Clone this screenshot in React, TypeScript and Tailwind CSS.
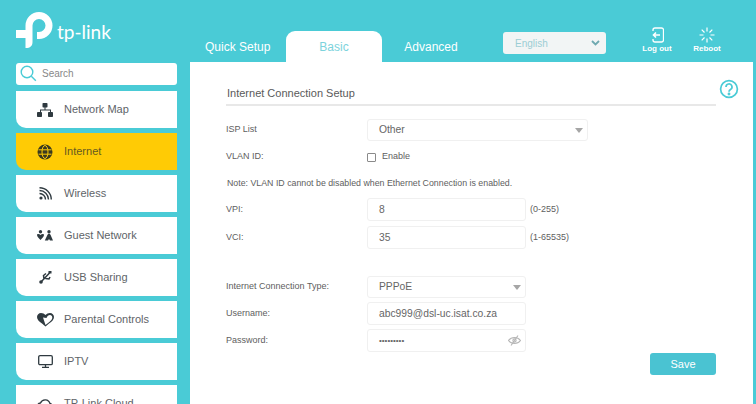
import type { ReactNode } from 'react';

const TEAL = '#4acbd6';

function Logo() {
  return (
    <svg width="37" height="36" viewBox="0 0 37 36" className="shrink-0">
      <path
        d="M9.500 13.500A13.500 13.500 0 1 1 23 27h-2v-7h2a6.500 6.500 0 1 0-6.500-6.500V30c0 4-2.500 6-6.500 6h-.5V26H0v-8h9.500z"
        fill="#fff"
      />
    </svg>
  );
}

const NAV: { label: string; icon: ReactNode; active?: boolean }[] = [
  {
    label: 'Network Map',
    icon: (
      <svg width="16" height="14" viewBox="0 0 16 14" fill="#2f3a40">
        <rect x="5.500" y="0" width="5" height="4.500" rx="0.800" />
        <rect x="0" y="9" width="5" height="5" rx="0.800" />
        <rect x="11" y="9" width="5" height="5" rx="0.800" />
        <path d="M7.500 4h1v2.500h5.500V9h-1V7.500h-9V9h-1V6.500h4.500z" />
      </svg>
    ),
  },
  {
    label: 'Internet',
    active: true,
    icon: (
      <svg width="16" height="16" viewBox="0 0 16 16" fill="none">
        <circle cx="8" cy="8" r="7.500" fill="#3a3a20" />
        <ellipse cx="8" cy="8" rx="3" ry="6.500" stroke="#ffcb05" strokeWidth="1" />
        <path d="M1.500 5.800h13M1.500 10.200h13" stroke="#ffcb05" strokeWidth="1" />
      </svg>
    ),
  },
  {
    label: 'Wireless',
    icon: (
      <svg width="13" height="13" viewBox="0 0 13 13" fill="none" stroke="#2f3a40" strokeWidth="1.400">
        <circle cx="2" cy="11" r="1.600" fill="#2f3a40" stroke="none" />
        <path d="M0.500 6.500a6 6 0 0 1 6 6M0.500 3.500a9 9 0 0 1 9 9M0.500 0.700a11.800 11.800 0 0 1 11.800 11.800" />
      </svg>
    ),
  },
  {
    label: 'Guest Network',
    icon: (
      <svg width="16" height="12" viewBox="0 0 16 12" fill="#2f3a40">
        <circle cx="3.500" cy="1.700" r="1.700" />
        <circle cx="12" cy="1.700" r="1.700" />
        <path d="M0 5c0-.8.600-1 1.200-1 1 0 1.700.3 2.300 1 .6-.7 1.300-1 2.300-1 .6 0 1.200.2 1.200 1 0 1.500-2 3.500-3.500 5C2 8.500 0 6.500 0 5zM12 3.800c.8 0 1.200.5 1.600 1.200l2.400 5.500h-3L12 9l-1 1.500H7.800L10.400 5c.4-.7.800-1.200 1.600-1.200z" />
      </svg>
    ),
  },
  {
    label: 'USB Sharing',
    icon: (
      <svg width="13" height="13" viewBox="0 0 13 13" fill="none" stroke="#2f3a40" strokeWidth="1.500">
        <circle cx="2" cy="11" r="1.800" fill="#2f3a40" stroke="none" />
        <path d="M2 11 10.500 2M5 8l-.5-3.500L7 2.500M6.500 7.500l3.500.5 1-2" />
        <rect x="9.500" y="0" width="3" height="2.500" fill="#2f3a40" stroke="none" />
      </svg>
    ),
  },
  {
    label: 'Parental Controls',
    icon: (
      <svg width="17" height="14" viewBox="0 0 17 14">
        <path
          d="M4 0C1.800 0 0 1.800 0 4c0 2.500 2 4.500 5 6.500l3.500 3 3.500-3c3-2 5-4 5-6.500 0-2.200-1.800-4-4-4-1.900 0-3.300.8-4.500 2C7.300.8 5.900 0 4 0z"
          fill="#2f3a40"
        />
        <path d="M8.500 12 12 9.200c2-1.500 3.300-3 3.300-4.700 0-1.300-1-2.400-2.300-2.400-1.500 0-2.800 1.200-3.500 3L6 4.500" fill="#fff" />
      </svg>
    ),
  },
  {
    label: 'IPTV',
    icon: (
      <svg width="15" height="13" viewBox="0 0 15 13" fill="none" stroke="#2f3a40" strokeWidth="1.300">
        <rect x="0.700" y="0.700" width="13.600" height="9" rx="1.300" />
        <path d="M7.500 10v2M4 12.300h7" />
      </svg>
    ),
  },
  {
    label: 'TP-Link Cloud',
    icon: (
      <svg width="16" height="12" viewBox="0 0 16 12" fill="none" stroke="#2f3a40" strokeWidth="1.300">
        <path d="M4 11h8.500a2.800 2.800 0 0 0 .5-5.500A5 5 0 0 0 3.500 5 3 3 0 0 0 4 11z" />
      </svg>
    ),
  },
];

function NavItem({ label, icon, active }: { label: string; icon: ReactNode; active?: boolean }) {
  return (
    <div
      className={`flex h-[37px] shrink-0 items-center rounded-bl-[10px] ${
        active ? 'bg-[#ffcb05] text-[#665a20]' : 'bg-white text-[#606468]'
      }`}
    >
      <span className="flex w-[48px] justify-center pl-[10px]">{icon}</span>
      <span className="text-[11px]">{label}</span>
    </div>
  );
}

function Caret() {
  return (
    <svg width="8" height="5" viewBox="0 0 8 5" className="shrink-0">
      <path d="M0 0h8L4 5z" fill="#a6a6a6" />
    </svg>
  );
}

function Field({ children, className }: { children: ReactNode; className: string }) {
  return (
    <div
      className={`flex items-center justify-between rounded-[3px] border border-[#f0f0f0] bg-white pr-[4px] pl-[11px] text-[10.300px] text-[#666] ${className}`}
    >
      {children}
    </div>
  );
}

function Label({ children }: { children: ReactNode }) {
  return <span className="w-[141px] shrink-0 text-[9px] text-[#606060]">{children}</span>;
}

export default function App() {
  return (
    <div
      className="flex h-[404px] w-[756px] flex-col overflow-hidden bg-[#4acbd6]"
      style={{ fontFamily: '"Liberation Sans", Arial, sans-serif' }}
    >
      {/* top bar */}
      <div className="flex h-[62px] shrink-0">
        <div className="flex w-[190px] shrink-0 items-start pt-[12px] pl-[16px]">
          <Logo />
          <span className="mt-[10px] ml-[4px] text-[19px] leading-none text-white" style={{ fontFamily: 'Lato, sans-serif' }}>
            tp-link
          </span>
        </div>
        <div className="flex h-full items-end pl-[15px]">
          <div className="flex h-[31px] w-[81px] items-center text-[12px] text-white">Quick Setup</div>
          <div className="flex h-[31px] w-[96px] items-center justify-center rounded-t-[9px] bg-white text-[12px] text-[#7cd3dc]">
            Basic
          </div>
          <div className="mr-[23px] flex h-[31px] w-[98px] items-center justify-center text-[12px] text-white">Advanced</div>
        </div>
        <div className="mt-[32px] flex h-[22px] w-[103px] items-center justify-between rounded-[3px] bg-[#f2f5f5] pr-[6px] pl-[12px] text-[10px] text-[#9ccdd4]">
          English
          <svg width="9" height="6" viewBox="0 0 9 6" fill="none" stroke="#6fa9b0" strokeWidth="1.800">
            <path d="M1 1l3.500 3.500L8 1" />
          </svg>
        </div>
        <div className="ml-[24px] flex w-[54px] flex-col items-center pt-[27px] text-[8px] leading-none font-bold text-white">
          <svg width="14" height="16" viewBox="0 0 14 16" fill="none" stroke="#fff" strokeWidth="1.300" className="mb-[2px]">
            <path d="M3 4V3a2 2 0 0 1 2-2h6.500a2 2 0 0 1 2 2v10a2 2 0 0 1-2 2H5a2 2 0 0 1-2-2v-1" />
            <path d="M10 8H3.500M6 5.500 3.500 8 6 10.500" strokeWidth="1.600" />
          </svg>
          Log out
        </div>
        <div className="ml-[-4px] flex w-[54px] flex-col items-center pt-[27px] text-[8px] leading-none font-bold text-white">
          <svg width="16" height="16" viewBox="0 0 16 16" fill="none" stroke="#fff" strokeWidth="1.200" className="mb-[2px]">
            <path d="M8 0.500v4M8 11.500v4M0.500 8h4M11.500 8h4M2.700 2.700l2.800 2.800M10.500 10.500l2.800 2.800M13.300 2.700l-2.800 2.800M5.500 10.500l-2.800 2.800" />
          </svg>
          Reboot
        </div>
      </div>

      <div className="flex min-h-0 flex-1">
        {/* side nav */}
        <div className="flex w-[190px] shrink-0 flex-col gap-[5px] pt-[1px] pr-[13px] pl-[16px]">
          <div className="mb-[1px] flex h-[22px] shrink-0 items-center rounded-[3px] bg-white pb-[1px] pl-[4px] text-[10px] text-[#888]">
            <svg width="17" height="17" viewBox="0 0 17 17" fill="none" stroke={TEAL} strokeWidth="1.400" className="mr-[5px]">
              <circle cx="7" cy="7" r="5.800" />
              <path d="m11.300 11.300 4.500 4.500" />
            </svg>
            Search
          </div>
          {NAV.map((n) => (
            <NavItem key={n.label} {...n} />
          ))}
        </div>

        {/* content panel */}
        <div className="mr-[3px] flex-1 bg-white pt-[16px] pr-[14px] pl-[36px]">
          <div className="flex items-start">
            <div className="flex h-[28px] flex-1 items-center border-b-2 border-[#e8e8e8] pt-[4px] pl-[1px] text-[11px] text-[#5a5a5a]">
              Internet Connection Setup
            </div>
            <svg width="20" height="20" viewBox="0 0 20 20" fill="none" stroke={TEAL} strokeWidth="1.700" className="mt-[1px] ml-[3px]">
              <circle cx="10" cy="10" r="8.400" />
              <path d="M7 8a3 3 0 1 1 4.500 2.500c-1 .6-1.500 1-1.500 2.300" />
              <circle cx="10" cy="15" r="0.600" />
            </svg>
          </div>

          <div className="mt-[13px] flex flex-col">
            <div className="flex h-[22px] items-center">
              <Label>ISP List</Label>
              <Field className="h-[22px] w-[221px]">
                Other
                <Caret />
              </Field>
            </div>
            <div className="mt-[6px] flex h-[20px] items-center">
              <Label>VLAN ID:</Label>
              <span className="mr-[6px] h-[9px] w-[9px] rounded-[1px] border border-[#8a8a8a]" />
              <span className="text-[9px] text-[#606060]">Enable</span>
            </div>
            <div className="mt-[7px] flex h-[20px] items-center pl-[1px] text-[8.800px] text-[#606060]">
              Note: VLAN ID cannot be disabled when Ethernet Connection is enabled.
            </div>
            <div className="mt-[4px] flex h-[23px] items-center">
              <Label>VPI:</Label>
              <Field className="h-[23px] w-[159px]">8</Field>
              <span className="ml-[4px] text-[9px] text-[#606060]">(0-255)</span>
            </div>
            <div className="mt-[5px] flex h-[23px] items-center">
              <Label>VCI:</Label>
              <Field className="h-[23px] w-[159px]">35</Field>
              <span className="ml-[4px] text-[9px] text-[#606060]">(1-65535)</span>
            </div>
            <div className="mt-[27px] flex h-[22px] items-center">
              <Label>Internet Connection Type:</Label>
              <Field className="h-[22px] w-[159px]">
                PPPoE
                <Caret />
              </Field>
            </div>
            <div className="mt-[4px] flex h-[23px] items-center">
              <Label>Username:</Label>
              <Field className="h-[23px] w-[159px]">abc999@dsl-uc.isat.co.za</Field>
            </div>
            <div className="mt-[4px] flex h-[23px] items-center">
              <Label>Password:</Label>
              <Field className="h-[23px] w-[159px]">
                <span className="text-[8px]">•••••••••</span>
                <svg width="13" height="11" viewBox="0 0 13 11" fill="none" stroke="#b5b5b5" strokeWidth="1.100">
                  <path d="M0.500 5.500C2 3.500 4 2.500 6.500 2.500s4.500 1 6 3c-1.500 2-3.500 3-6 3s-4.500-1-6-3z" />
                  <circle cx="6.500" cy="5.500" r="1.600" />
                  <path d="M10 0.500 3 10.500" />
                </svg>
              </Field>
            </div>
            <div className="mt-[1px] flex justify-end pr-[23px]">
              <div className="flex h-[22px] w-[66px] items-center justify-center rounded-[3px] bg-[#4ac3d2] text-[11px] text-white">Save</div>
            </div>
          </div>
        </div>
      </div>
    </div>
  );
}
